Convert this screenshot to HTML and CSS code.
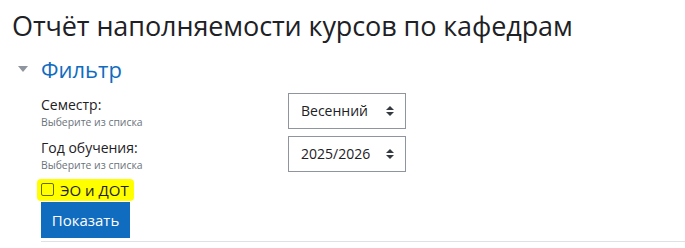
FILE: index.html
```html
<!DOCTYPE html>
<html lang="ru">
<head>
<meta charset="UTF-8">
<title>Отчёт наполняемости курсов по кафедрам</title>
<link rel="stylesheet" href="styles.css">
</head>
<body>
  <h2 class="page-title">Отчёт наполняемости курсов по кафедрам</h2>
  <form class="mform">
    <fieldset class="filter">
      <legend class="filter-legend">
        <span class="filter-caret"></span>
        <span class="filter-title">Фильтр</span>
      </legend>
      <div class="form-row">
        <div class="form-label">
          <label for="semester">Семестр:</label>
          <div class="form-hint">Выберите из списка</div>
        </div>
        <div class="form-field">
          <div class="select" id="semester">Весенний<span class="select-arrow"></span></div>
        </div>
      </div>
      <div class="form-row">
        <div class="form-label">
          <label for="year">Год обучения:</label>
          <div class="form-hint">Выберите из списка</div>
        </div>
        <div class="form-field">
          <div class="select" id="year">2025/2026<span class="select-arrow"></span></div>
        </div>
      </div>
      <label class="check"><span class="check-box"></span>ЭО и ДОТ</label>
      <div class="actions">
        <button type="button" class="btn-primary">Показать</button>
      </div>
    </fieldset>
  </form>
</body>
</html>
```

FILE: styles.css
```css
body {
  margin: 0;
  background: #fff;
  color: #1d2125;
  font-family: "Open Sans", "Noto Sans", sans-serif;
  overflow: hidden;
}

.page-title {
  margin: 0;
  padding: 6px 0 0 12px;
  font-size: 27px;
  font-weight: 400;
  line-height: 40px;
  letter-spacing: -0.1px;
}

.mform {
  margin: 0;
}

.filter {
  margin: 0;
  padding: 0;
  border: 0;
}

.filter-legend {
  display: flex;
  align-items: center;
  padding: 8px 0 0 18px;
  height: 30px;
}

.filter-caret {
  width: 0;
  height: 0;
  border-left: 5px solid transparent;
  border-right: 5px solid transparent;
  border-top: 6px solid #8f959e;
  margin-right: 13px;
}

.filter-title {
  color: #0f6cbf;
  font-size: 22px;
  line-height: 30px;
}

.form-row {
  display: flex;
  margin-left: 41px;
  height: 43px;
}

.form-row:first-of-type {
  margin-top: 9px;
}

.form-label {
  width: 247px;
  padding-top: 3px;
}

.form-label label {
  display: block;
  font-size: 14px;
  line-height: 18px;
}

.form-hint {
  font-size: 10.4px;
  color: #6a737b;
  line-height: 16px;
}

.select {
  position: relative;
  box-sizing: border-box;
  width: 118px;
  height: 36px;
  border: 1px solid #8f959e;
  padding: 0 0 0 12px;
  font-size: 14px;
  line-height: 34px;
  color: #1d2125;
}

.select-arrow {
  position: absolute;
  right: 11px;
  top: 12px;
  width: 0;
  height: 0;
  border-left: 4px solid transparent;
  border-right: 4px solid transparent;
  border-bottom: 4px solid #343a40;
}

.select-arrow::after {
  content: "";
  position: absolute;
  left: -4px;
  top: 6px;
  border-left: 4px solid transparent;
  border-right: 4px solid transparent;
  border-top: 4px solid #343a40;
}

.check {
  display: inline-flex;
  align-items: center;
  margin: -1px 0 0 37px;
  padding: 0 5px 0 4px;
  height: 22px;
  background: #ffff00;
  font-size: 15px;
  border-radius: 4px;
}

.check-box {
  box-sizing: border-box;
  width: 13px;
  height: 13px;
  border: 1px solid #6a6a00;
  border-radius: 2px;
  margin-right: 6px;
}

.actions {
  margin-left: 41px;
  padding-bottom: 3px;
  border-bottom: 1px solid #dee2e6;
}

.btn-primary {
  display: block;
  margin-top: 1px;
  width: 89px;
  height: 36px;
  border: 0;
  background: #0f6cbf;
  color: #fff;
  font-family: inherit;
  font-size: 15px;
  padding: 0;
}
```
